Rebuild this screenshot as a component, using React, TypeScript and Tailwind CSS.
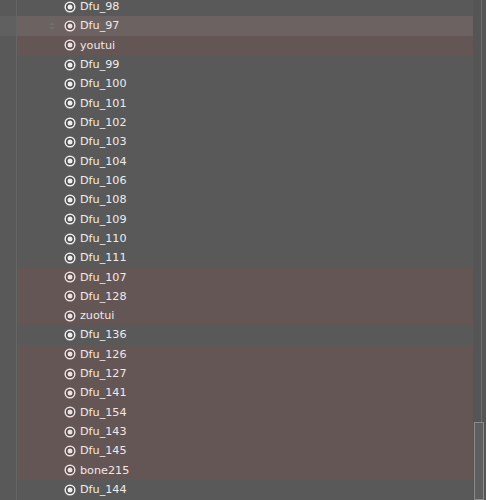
import React from "react";

type Row = { name: string; hl?: "sel" | "red" };

const rows: Row[] = [
  { name: "Dfu_98" },
  { name: "Dfu_97", hl: "sel" },
  { name: "youtui", hl: "red" },
  { name: "Dfu_99" },
  { name: "Dfu_100" },
  { name: "Dfu_101" },
  { name: "Dfu_102" },
  { name: "Dfu_103" },
  { name: "Dfu_104" },
  { name: "Dfu_106" },
  { name: "Dfu_108" },
  { name: "Dfu_109" },
  { name: "Dfu_110" },
  { name: "Dfu_111" },
  { name: "Dfu_107", hl: "red" },
  { name: "Dfu_128", hl: "red" },
  { name: "zuotui", hl: "red" },
  { name: "Dfu_136" },
  { name: "Dfu_126", hl: "red" },
  { name: "Dfu_127", hl: "red" },
  { name: "Dfu_141", hl: "red" },
  { name: "Dfu_154", hl: "red" },
  { name: "Dfu_143", hl: "red" },
  { name: "Dfu_145", hl: "red" },
  { name: "bone215", hl: "red" },
  { name: "Dfu_144" },
];

function Radio({ tint }: { tint: boolean }) {
  const c = tint ? "#f3dede" : "#eeeeee";
  return (
    <svg width="12" height="12" viewBox="0 0 12 12" className="shrink-0">
      <circle cx="6" cy="6" r="4.8" fill="#4a4a4a" stroke={c} strokeWidth="1.5" />
      <circle cx="6" cy="6" r="2.5" fill={c} />
    </svg>
  );
}

export default function App() {
  return (
    <div
      className="w-[486px] h-[500px] overflow-hidden bg-[#595959] relative flex"
      style={{ fontFamily: '"DejaVu Sans", sans-serif' }}
    >
      <div className="flex-1 min-w-0 relative">
        <div className="absolute left-[16px] top-0 bottom-0 w-px bg-[#656565]" />
        <div className="-mt-[2.9px] flex flex-col">
          {rows.map((r, i) => (
            <div key={i} className="h-[19.32px] flex items-center relative">
              {r.hl === "sel" && (
                <>
                  <div className="absolute left-0 w-[16px] top-0 bottom-0 bg-[#616060]" />
                  <div className="absolute left-[17px] right-0 top-0 bottom-0 bg-[#6d6262]" />
                  <svg
                    width="8"
                    height="10"
                    viewBox="0 0 8 10"
                    className="absolute left-[48px] top-[5px]"
                  >
                    <path d="M1 4 L4 1 L7 4 Z" fill="#6f6f6f" />
                    <path d="M1 6 L4 9 L7 6 Z" fill="#6f6f6f" />
                  </svg>
                </>
              )}
              {r.hl === "red" && (
                <div className="absolute left-[17px] right-0 top-0 bottom-0 bg-[#655656]" />
              )}
              <div className="relative flex items-center gap-[4px] pl-[64px]">
                <Radio tint={!!r.hl} />
                <span
                  className={
                    "text-[11.2px] leading-none " +
                    (r.hl ? "text-[#f2e6e6]" : "text-[#ececec]")
                  }
                >
                  {r.name}
                </span>
              </div>
            </div>
          ))}
        </div>
      </div>
      <div className="w-[13px] shrink-0 relative bg-[#555555]">
        <div className="absolute left-[8px] top-0 bottom-0 w-px bg-[#6c6c6c]" />
        <div className="absolute left-[1px] w-[10px] top-[422px] bottom-0 border border-[#8a8a8a] bg-[#5e5e5e]" />
      </div>
    </div>
  );
}
